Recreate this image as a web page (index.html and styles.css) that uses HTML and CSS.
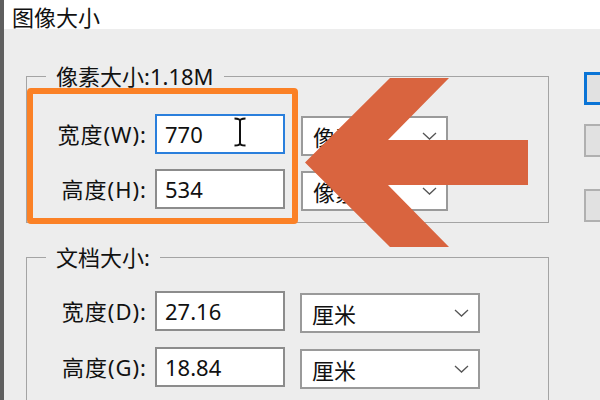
FILE: index.html
```html
<!DOCTYPE html>
<html lang="zh-CN">
<head>
    <meta charset="UTF-8">
    <meta name="viewport" content="width=device-width, initial-scale=1.0">
    <title>图像大小</title>
    <link rel="stylesheet" href="styles.css">
</head>
<body>

    <div class="window">
        <div class="pane">
            <div class="titlebar">图像大小</div>

            <div class="content">
                <div class="form-col">
                    <!-- Pixel dimensions -->
                    <fieldset class="group">
                        <legend>像素大小:1.18M</legend>
                        <div class="rows">
                            <div class="row">
                                <label class="label">宽度(W):</label>
                                <input class="field focused" value="770">
                                <div class="select">
                                    <span>像素</span>
                                    <svg class="chevron" width="15" height="8" viewBox="0 0 15 8"><polyline points="1,1 7.5,7 14,1"/></svg>
                                </div>
                            </div>
                            <div class="row">
                                <label class="label">高度(H):</label>
                                <input class="field" value="534">
                                <div class="select">
                                    <span>像素</span>
                                    <svg class="chevron" width="15" height="8" viewBox="0 0 15 8"><polyline points="1,1 7.5,7 14,1"/></svg>
                                </div>
                            </div>
                        </div>
                    </fieldset>

                    <!-- Document size -->
                    <fieldset class="group doc">
                        <legend>文档大小:</legend>
                        <div class="rows">
                            <div class="row">
                                <label class="label">宽度(D):</label>
                                <input class="field" value="27.16">
                                <div class="select">
                                    <span>厘米</span>
                                    <svg class="chevron" width="15" height="8" viewBox="0 0 15 8"><polyline points="1,1 7.5,7 14,1"/></svg>
                                </div>
                            </div>
                            <div class="row">
                                <label class="label">高度(G):</label>
                                <input class="field" value="18.84">
                                <div class="select">
                                    <span>厘米</span>
                                    <svg class="chevron" width="15" height="8" viewBox="0 0 15 8"><polyline points="1,1 7.5,7 14,1"/></svg>
                                </div>
                            </div>
                        </div>
                    </fieldset>
                </div>

                <div class="btn-col">
                    <button class="btn default"></button>
                    <button class="btn"></button>
                    <button class="btn spaced"></button>
                </div>
            </div>
        </div>

        <!-- Annotations drawn over the dialog -->
        <div class="highlight"></div>
        <svg class="arrow" width="600" height="400" viewBox="0 0 600 400">
            <polygon points="305,162.5 390,78 449,78 388,140 528,140 528,185 388,185 449,247 390,247"/>
        </svg>
        <svg class="ibeam" width="16" height="30" viewBox="0 0 16 30">
            <path d="M2.5 1.5 Q8 1.5 8 4 Q8 1.5 13.5 1.5 M8 4 V26 M2.5 28.5 Q8 28.5 8 26 Q8 28.5 13.5 28.5"/>
        </svg>
    </div>

</body>
</html>
```

FILE: styles.css
```css
body, html {
    margin: 0;
    padding: 0;
    width: 600px;
    height: 400px;
    overflow: hidden;
    background-color: #ededed;
}

body {
    font-family: "Noto Sans", "Noto Sans CJK SC", sans-serif;
    font-size: 22px;
    color: #111;
}

.window {
    position: relative;
    width: 600px;
    height: 400px;
    overflow: hidden;
}

/* Window frame edge on the left (grey + blue) */
.pane {
    height: 100%;
    border-left: 4px solid;
    border-image: linear-gradient(to right, #5f5f5f 50%, #3d8fe0 50%) 1;
    display: flex;
    flex-direction: column;
}

.titlebar {
    height: 43px;
    box-sizing: border-box;
    padding: 5px 0 0 8px;
    line-height: 24px;
    background-color: #fff;
}

.content {
    display: flex;
    gap: 35px;
    padding: 35px 0 0 22px;
}

.form-col {
    flex: none;
    width: 523px;
}

/* Group boxes */
.group {
    margin: 0;
    min-width: 0;
    padding: 26px 0 11px 0;
    border: 1px solid #a4a4a4;
}

.group legend {
    margin-left: 19px;
    padding: 0 10px;
    line-height: 24px;
}

.group.doc {
    margin-top: 22px;
    padding-top: 22px;
    padding-bottom: 30px;
}

.rows {
    display: flex;
    flex-direction: column;
    gap: 13px;
}

.doc .rows {
    gap: 14px;
}

.row {
    display: flex;
    align-items: flex-start;
}

.label {
    width: 120px;
    margin-right: 8px;
    text-align: right;
    letter-spacing: 1px;
    line-height: 40px;
}

.field {
    width: 130px;
    height: 40px;
    box-sizing: border-box;
    margin: 0;
    padding: 0 8px;
    border: 2px solid #8c8c8c;
    background-color: #fff;
    font: inherit;
    color: #111;
    outline: none;
}

.field.focused {
    border-color: #2a7fdc;
}

/* Unit dropdowns */
.select {
    width: 147px;
    height: 40px;
    box-sizing: border-box;
    margin: 2px 0 0 16px;
    padding: 0 9px 0 10px;
    border: 2px solid #9a9a9a;
    background-color: #fff;
    display: flex;
    align-items: center;
    justify-content: space-between;
}

.doc .select {
    width: 180px;
    margin-left: 15px;
}

.chevron polyline {
    fill: none;
    stroke: #555;
    stroke-width: 1.3;
}

/* Right side buttons (cut off) */
.btn-col {
    flex: none;
    display: flex;
    flex-direction: column;
    padding-top: 8px;
}

.btn {
    width: 90px;
    height: 33px;
    box-sizing: border-box;
    border: 2px solid #b0b0b0;
    background-color: #e1e1e1;
    padding: 0;
}

.btn + .btn {
    margin-top: 19px;
}

.btn.spaced {
    margin-top: 32px;
}

.btn.default {
    border: 3px solid #0a74d6;
}

/* Annotation overlays */
.highlight {
    position: absolute;
    left: 27px;
    top: 88px;
    width: 271px;
    height: 136px;
    box-sizing: border-box;
    border: 6px solid #fb8126;
    border-radius: 4px;
}

.arrow {
    position: absolute;
    left: 0;
    top: 0;
    pointer-events: none;
}

.arrow polygon {
    fill: #d9643f;
}

.ibeam {
    position: absolute;
    left: 232px;
    top: 117px;
}

.ibeam path {
    fill: none;
    stroke: #111;
    stroke-width: 2;
}
```
